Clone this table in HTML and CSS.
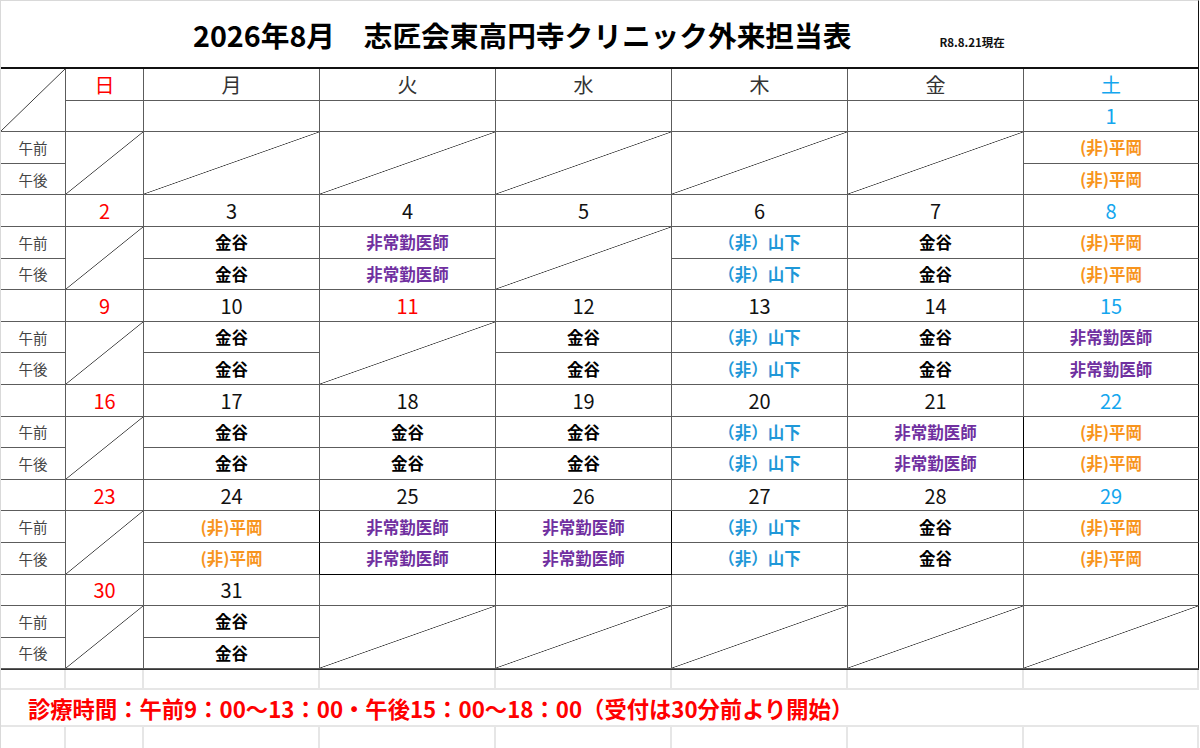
FILE: index.html
```html
<!DOCTYPE html>
<html lang="ja">
<head>
<meta charset="utf-8">
<title>外来担当表</title>
<link rel="stylesheet" href="styles.css">
</head>
<body>
<div class="sheet">
  <div class="title">
    <div class="title-line">
      <span class="title-main">2026年8月　志匠会東高円寺クリニック外来担当表</span>
      <span class="title-note">R8.8.21現在</span>
    </div>
  </div>

  <div class="grid">
    <!-- header -->
    <div class="c dg"></div>
    <div class="c wd sun">日</div>
    <div class="c wd">月</div>
    <div class="c wd">火</div>
    <div class="c wd">水</div>
    <div class="c wd">木</div>
    <div class="c wd">金</div>
    <div class="c wd sat r">土</div>
    <!-- week 1 -->
    <div class="c"></div>
    <div class="c"></div>
    <div class="c"></div>
    <div class="c"></div>
    <div class="c"></div>
    <div class="c"></div>
    <div class="c dt sat r">1</div>
    <div class="c lbl">午前</div>
    <div class="c dg"></div>
    <div class="c dg"></div>
    <div class="c dg"></div>
    <div class="c dg"></div>
    <div class="c dg"></div>
    <div class="c dg"></div>
    <div class="c n hr r">(非)平岡</div>
    <div class="c lbl">午後</div>
    <div class="c n hr r">(非)平岡</div>
    <!-- week 2 -->
    <div class="c"></div>
    <div class="c dt sun">2</div>
    <div class="c dt">3</div>
    <div class="c dt">4</div>
    <div class="c dt">5</div>
    <div class="c dt">6</div>
    <div class="c dt">7</div>
    <div class="c dt sat r">8</div>
    <div class="c lbl">午前</div>
    <div class="c dg"></div>
    <div class="c n kn">金谷</div>
    <div class="c n hj">非常勤医師</div>
    <div class="c dg"></div>
    <div class="c n ym">（非）山下</div>
    <div class="c n kn">金谷</div>
    <div class="c n hr r">(非)平岡</div>
    <div class="c lbl">午後</div>
    <div class="c n kn">金谷</div>
    <div class="c n hj">非常勤医師</div>
    <div class="c n ym">（非）山下</div>
    <div class="c n kn">金谷</div>
    <div class="c n hr r">(非)平岡</div>
    <!-- week 3 -->
    <div class="c"></div>
    <div class="c dt sun">9</div>
    <div class="c dt">10</div>
    <div class="c dt sun">11</div>
    <div class="c dt">12</div>
    <div class="c dt">13</div>
    <div class="c dt">14</div>
    <div class="c dt sat r">15</div>
    <div class="c lbl">午前</div>
    <div class="c dg"></div>
    <div class="c n kn">金谷</div>
    <div class="c dg"></div>
    <div class="c n kn">金谷</div>
    <div class="c n ym">（非）山下</div>
    <div class="c n kn">金谷</div>
    <div class="c n hj r">非常勤医師</div>
    <div class="c lbl">午後</div>
    <div class="c n kn">金谷</div>
    <div class="c n kn">金谷</div>
    <div class="c n ym">（非）山下</div>
    <div class="c n kn">金谷</div>
    <div class="c n hj r">非常勤医師</div>
    <!-- week 4 -->
    <div class="c"></div>
    <div class="c dt sun">16</div>
    <div class="c dt">17</div>
    <div class="c dt">18</div>
    <div class="c dt">19</div>
    <div class="c dt">20</div>
    <div class="c dt">21</div>
    <div class="c dt sat r">22</div>
    <div class="c lbl">午前</div>
    <div class="c dg"></div>
    <div class="c n kn">金谷</div>
    <div class="c n kn">金谷</div>
    <div class="c n kn">金谷</div>
    <div class="c n ym">（非）山下</div>
    <div class="c n hj bk">非常勤医師</div>
    <div class="c n hr r">(非)平岡</div>
    <div class="c lbl">午後</div>
    <div class="c n kn">金谷</div>
    <div class="c n kn">金谷</div>
    <div class="c n kn">金谷</div>
    <div class="c n ym">（非）山下</div>
    <div class="c n hj bk">非常勤医師</div>
    <div class="c n hr r">(非)平岡</div>
    <!-- week 5 -->
    <div class="c"></div>
    <div class="c dt sun">23</div>
    <div class="c dt">24</div>
    <div class="c dt">25</div>
    <div class="c dt">26</div>
    <div class="c dt">27</div>
    <div class="c dt">28</div>
    <div class="c dt sat r">29</div>
    <div class="c lbl">午前</div>
    <div class="c dg"></div>
    <div class="c n hr bk">(非)平岡</div>
    <div class="c n hj bk">非常勤医師</div>
    <div class="c n hj bk">非常勤医師</div>
    <div class="c n ym">（非）山下</div>
    <div class="c n kn">金谷</div>
    <div class="c n hr r">(非)平岡</div>
    <div class="c lbl">午後</div>
    <div class="c n hr bk">(非)平岡</div>
    <div class="c n hj bk bkb">非常勤医師</div>
    <div class="c n hj bk bkb">非常勤医師</div>
    <div class="c n ym">（非）山下</div>
    <div class="c n kn">金谷</div>
    <div class="c n hr r">(非)平岡</div>
    <!-- week 6 -->
    <div class="c"></div>
    <div class="c dt sun">30</div>
    <div class="c dt">31</div>
    <div class="c"></div>
    <div class="c"></div>
    <div class="c"></div>
    <div class="c"></div>
    <div class="c r"></div>
    <div class="c lbl">午前</div>
    <div class="c dg"></div>
    <div class="c n kn">金谷</div>
    <div class="c dg"></div>
    <div class="c dg"></div>
    <div class="c dg"></div>
    <div class="c dg"></div>
    <div class="c dg r"></div>
    <div class="c lbl">午後</div>
    <div class="c n kn">金谷</div>
  </div>

  <div class="foot-cells">
    <div></div><div></div><div></div><div></div><div></div><div></div><div></div><div></div>
  </div>
  <div class="foot-note">診療時間：午前9：00～13：00・午後15：00～18：00（受付は30分前より開始）</div>
  <div class="foot-cells last">
    <div></div><div></div><div></div><div></div><div></div><div></div><div></div><div></div>
  </div>
</div>
</body>
</html>
```

FILE: styles.css
```css
* {
  box-sizing: border-box;
}

body {
  margin: 0;
  background: #ffffff;
  font-family: "Noto Sans CJK JP", "Noto Sans", sans-serif;
  color: #111;
}

.sheet {
  width: 1199px;
  border-left: 1px solid #d9d9d9;
}

.title {
  height: 67px;
  border-top: 1px solid #d9d9d9;
  border-right: 1px solid #111;
  display: flex;
  align-items: center;
  padding-left: 192px;
}

.title-line {
  display: flex;
  align-items: baseline;
}

.title-main {
  font-size: 28.7px;
  font-weight: 700;
  color: #000;
}

.title-note {
  font-size: 11.5px;
  font-weight: 700;
  color: #111;
  margin-left: 88px;
}

.grid {
  display: grid;
  grid-template-columns: 65px 78px repeat(5, 176px) 175px;
  grid-template-rows: repeat(19, 31.6px);
  border-top: 2px solid #111;
  border-bottom: 1px solid #333;
}

.c {
  border-right: 1px solid #5c5c5c;
  border-bottom: 1px solid #5c5c5c;
  display: flex;
  align-items: center;
  justify-content: center;
  min-width: 0;
  white-space: nowrap;
}

.c.r {
  border-right-color: #111;
}

.c.bk {
  border-right-color: #000;
}

.c.bkb {
  border-bottom-color: #000;
}

.dg {
  grid-row: span 2;
  background: linear-gradient(to bottom right,
      transparent calc(50% - 0.7px),
      #3c3c3c 50%,
      transparent calc(50% + 0.7px));
}

.wd {
  font-size: 20px;
  color: #333;
}

.dt {
  font-size: 20px;
  color: #111;
}

.sun {
  color: #ff0000;
}

.sat {
  color: #14a6ee;
}

.lbl {
  font-size: 14.5px;
  color: #444;
}

.n {
  font-size: 16.5px;
  font-weight: 700;
}

.kn {
  color: #000;
}

.hj {
  color: #7030a0;
}

.hr {
  color: #f7941d;
}

.ym {
  color: #1f98d8;
}

.foot-cells {
  display: grid;
  grid-template-columns: 65px 78px repeat(5, 176px) 175px;
  height: 20px;
  border-bottom: 2px solid #e6e6e6;
}

.foot-cells > div {
  border-right: 2px solid #e6e6e6;
}

.foot-cells.last {
  height: 22px;
  border-bottom: none;
}

.foot-note {
  height: 37px;
  border-bottom: 2px solid #e6e6e6;
  display: flex;
  align-items: center;
  padding-left: 27px;
  font-size: 22.3px;
  font-weight: 700;
  color: #ff0000;
  white-space: nowrap;
}
```
